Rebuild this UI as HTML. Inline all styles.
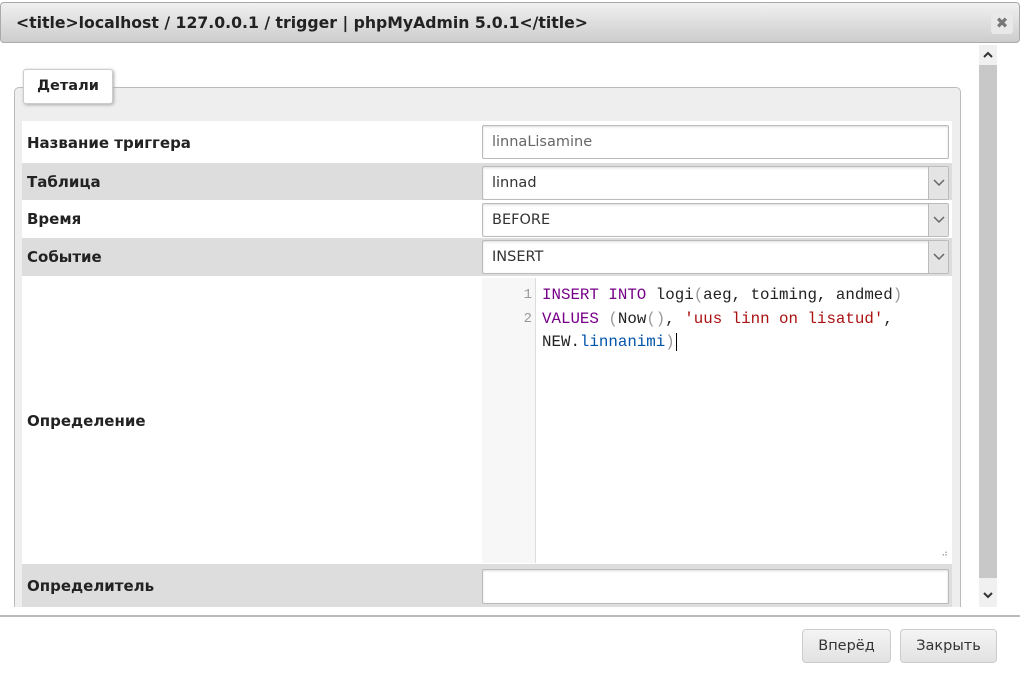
<!DOCTYPE html>
<html><head><meta charset="utf-8"><style>
*{box-sizing:border-box;margin:0;padding:0}
body{width:1024px;height:683px;background:#fff;position:relative;overflow:hidden;font-family:"DejaVu Sans","Liberation Sans",sans-serif;color:#222}
.abs{position:absolute}
.title{left:0;top:2px;width:1020px;height:41px;border:1px solid #aaa;border-radius:4px;background:linear-gradient(#f0f0f0,#cdcdcd);font-weight:bold;font-size:15.7px;line-height:39px;padding-left:15px;color:#222}
.close{left:991px;top:12px;width:22px;height:22px;background:#e8e8e8;border-radius:3px;color:#777;font-weight:bold;font-size:15px;text-align:center;line-height:22px}
.clip{left:0;top:45px;width:978px;height:562px;overflow:hidden}
.fs{left:14px;top:42px;width:947px;height:560px;border:1px solid #bbb;border-radius:5px;background:#eee}
.legend{left:23px;top:24px;width:90px;height:35px;background:#fff;border:1px solid #ccc;border-radius:3px;box-shadow:1px 1px 3px #aaa;font-weight:bold;font-size:14.5px;line-height:33px;text-align:center}
.row{left:22px;width:930px;font-weight:bold;font-size:15px;padding-left:5px}
.w{background:#fff}.g{background:#ddd}
.inp{left:482px;width:467px;height:34px;background:#fff;border:1px solid #bbb;border-radius:2px;font-size:14.5px;color:#333;padding-left:9px;line-height:32px;box-shadow:inset 0 1px 2px #ddd}
.sel .arr{position:absolute;right:0;top:0;width:20px;height:32px;background:#e4e4e4;border-left:1px solid #bbb}
.sel .arr svg{position:absolute;left:4px;top:12px}
.code{left:482px;top:233px;width:470px;height:285px;background:#fff;font-family:"Liberation Mono",monospace;font-size:15.8px}
.gut{position:absolute;left:0;top:0;width:54px;height:285px;background:#f7f7f7;border-right:1px solid #ddd}
.ln{position:absolute;left:0;width:50px;text-align:right;color:#999;font-size:14px}
.cl{position:absolute;left:60px;white-space:pre;color:#222}
.kw{color:#708}.st{color:#a11}.bl{color:#05a}.br{color:#999}
.sb{left:979px;top:45px;width:18px;height:562px;background:#f0f0f0}
.thumb{left:979px;top:65px;width:18px;height:513px;background:#c8c8c8}
.btn{top:629px;height:34px;border:1px solid #ccc;border-radius:4px;background:linear-gradient(#f4f4f4,#e2e2e2);font-size:14.5px;color:#333;text-align:center;line-height:32px}
</style></head><body>
<div class="abs title">&lt;title&gt;localhost / 127.0.0.1 / trigger | phpMyAdmin 5.0.1&lt;/title&gt;</div>
<div class="abs close">✖</div>
<div class="abs clip">
<div class="abs fs"></div>
<div class="abs legend">Детали</div>
<div class="abs row w" style="top:76px;height:42px;line-height:44px">Название триггера</div>
<div class="abs row g" style="top:118px;height:37px;line-height:38px">Таблица</div>
<div class="abs row w" style="top:155px;height:38px;line-height:38px">Время</div>
<div class="abs row g" style="top:193px;height:38px;line-height:38px">Событие</div>
<div class="abs row w" style="top:231px;height:288px;line-height:290px">Определение</div>
<div class="abs row g" style="top:519px;height:43px;line-height:44px">Определитель</div>
<div class="abs inp" style="top:80px;color:#666">linnaLisamine</div>
<div class="abs inp sel" style="top:121px">linnad<div class="arr"><svg width="12" height="8"><path d="M1 1l5 5 5-5" stroke="#666" stroke-width="1.5" fill="none"/></svg></div></div>
<div class="abs inp sel" style="top:158px">BEFORE<div class="arr"><svg width="12" height="8"><path d="M1 1l5 5 5-5" stroke="#666" stroke-width="1.5" fill="none"/></svg></div></div>
<div class="abs inp sel" style="top:195px">INSERT<div class="arr"><svg width="12" height="8"><path d="M1 1l5 5 5-5" stroke="#666" stroke-width="1.5" fill="none"/></svg></div></div>
<div class="abs code"><div class="gut"></div>
<div class="ln" style="top:9px">1</div><div class="ln" style="top:33px">2</div>
<div class="cl" style="top:8px"><span class="kw">INSERT INTO</span> logi<span class="br">(</span>aeg, toiming, andmed<span class="br">)</span></div>
<div class="cl" style="top:32px"><span class="kw">VALUES</span> <span class="br">(</span>Now<span class="br">()</span>, <span class="st">'uus linn on lisatud'</span>,</div>
<div class="cl" style="top:55px">NEW.<span class="bl">linnanimi</span><span class="br">)</span><span style="border-left:1px solid #000;margin-left:1px"></span></div>
<div style="position:absolute;right:4px;bottom:4px;color:#999;font-size:9px">⠴</div>
</div>
<div class="abs inp" style="top:524px;height:35px"></div>
</div>
<div class="abs sb"></div><div class="abs thumb"></div>
<svg class="abs" style="left:982px;top:50px" width="12" height="9"><path d="M2 7l4-4 4 4" stroke="#333" stroke-width="2" fill="none"/></svg>
<svg class="abs" style="left:982px;top:591px" width="12" height="9"><path d="M2 2l4 4 4-4" stroke="#333" stroke-width="2" fill="none"/></svg>
<div class="abs" style="left:0;top:615px;width:1020px;height:2px;background:#bbb"></div>
<div class="abs btn" style="left:802px;width:89px">Вперёд</div>
<div class="abs btn" style="left:900px;width:97px">Закрыть</div>
</body></html>
